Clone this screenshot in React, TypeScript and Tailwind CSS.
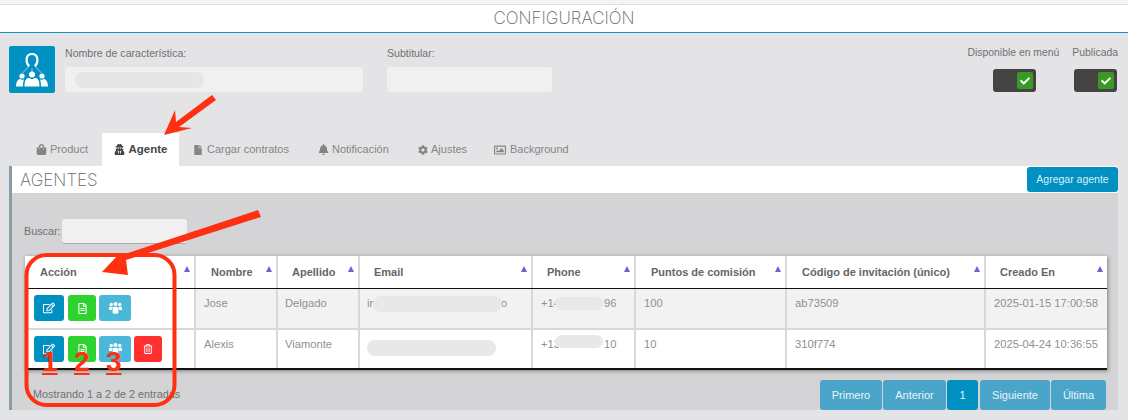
import { FaBell, FaCheck, FaCog, FaFile, FaRegEdit, FaRegFileAlt, FaRegImage, FaRegTrashAlt, FaShoppingBag, FaUserSecret } from "react-icons/fa";
import type { ReactNode } from "react";

const Pill = ({ className }: { className: string }) => (
  <span className={`absolute rounded-full bg-[#e8e8e8] ${className}`} />
);

const Toggle = () => (
  <div className="w-[43px] h-[23px] rounded-[3px] bg-[#444444] flex items-center justify-end pr-[3px]">
    <div className="w-[16px] h-[17px] rounded-[2px] bg-[#3b9a22] flex items-center justify-center text-white">
      <FaCheck size={10} />
    </div>
  </div>
);

const Tab = ({ icon, label, className }: { icon: ReactNode; label: string; className: string }) => (
  <div className={`h-[33px] flex items-center text-[#858585] text-[11px] ${className}`}>
    {icon}
    <span>{label}</span>
  </div>
);

const Sort = () => (
  <span className="absolute top-[10px] right-[4px] w-0 h-0 border-x-[3.5px] border-x-transparent border-b-[6px] border-b-[#6a62d8]" />
);

const headers = [
  { label: "Acción", pad: "pl-[15px]" },
  { label: "Nombre", pad: "pl-[15px]" },
  { label: "Apellido", pad: "pl-[14px]" },
  { label: "Email", pad: "pl-[14px]" },
  { label: "Phone", pad: "pl-[14px]" },
  { label: "Puntos de comisión", pad: "pl-[15px]" },
  { label: "Código de invitación (único)", pad: "pl-[15px]" },
  { label: "Creado En", pad: "pl-[14px]" },
];

const UsersIcon = () => (
  <svg width="13" height="12" viewBox="0 0 13 12" fill="white">
    <circle cx="2.200" cy="2.500" r="1.700" />
    <circle cx="6.500" cy="2" r="2" />
    <circle cx="10.800" cy="2.500" r="1.700" />
    <path d="M0 8V5.500C0 5 .5 4.800 1 4.800h2c.4 0 .7.2.8.5C3.300 6 3 6.800 3 8z" />
    <path d="M13 8V5.500c0-.5-.5-.7-1-.7h-2c-.4 0-.7.2-.8.5.5.7.8 1.500.8 2.700z" />
    <path d="M3.600 10.500V7.200c0-1.400.8-2.400 2-2.400h1.800c1.200 0 2 1 2 2.400v3.300c0 .8-1 1.300-2.900 1.300s-2.900-.5-2.900-1.300z" />
  </svg>
);

const ActionBtn = ({ color, width, children }: { color: string; width: string; children: ReactNode }) => (
  <div className={`h-[26px] rounded-[3px] flex items-center justify-center text-white ${color} ${width}`}>
    {children}
  </div>
);

const Actions = ({ remove }: { remove?: boolean }) => (
  <div className="flex gap-[3px] pl-[9px] pt-[6px]">
    <ActionBtn color="bg-[#0090c1] mr-[1px]" width="w-[30px]"><FaRegEdit size={12} /></ActionBtn>
    <ActionBtn color="bg-[#2fd32f]" width="w-[28px]"><FaRegFileAlt size={11} /></ActionBtn>
    <ActionBtn color="bg-[#4bb8da]" width="w-[32px]"><UsersIcon /></ActionBtn>
    {remove && <ActionBtn color="bg-[#ff3030]" width="w-[28px]"><FaRegTrashAlt size={10} /></ActionBtn>}
  </div>
);

const Cell = ({ children, bg, pl = "pl-[8px]" }: { children?: ReactNode; bg: string; pl?: string }) => (
  <div className={`relative pt-[7px] text-[11.2px] leading-[14px] text-[#909090] ${pl} ${bg}`}>{children}</div>
);

const PageBtn = ({ label, width, active }: { label: string; width: string; active?: boolean }) => (
  <div className={`h-[30px] rounded-[3px] flex items-center justify-center text-[11px] text-[#e6f4f9] ${width} ${active ? "bg-[#0090c1]" : "bg-[#4ba5c9]"}`}>
    {label}
  </div>
);

const gridCols = "grid grid-cols-[169px_80px_80px_171px_101px_149px_197px_121px] gap-x-[2px]";

export default function App() {
  return (
    <div className="relative w-[1128px] h-[420px] overflow-hidden bg-[#e4e4e7] font-['Liberation_Sans',sans-serif]">
      <div className="h-[5px] bg-[#f4f4f4] border-b border-[#dddddd]" />
      <div className="h-[28px] bg-white border-b border-[#0d94bf] flex items-center justify-center">
        <span className="font-['Inter',sans-serif] font-extralight text-[17px] text-[#666666]">CONFIGURACIÓN</span>
      </div>

      <div className="h-[100px] pl-[9px] pr-[10px] pt-[13px] flex">
        <div className="w-[46px] h-[47px] rounded-[2px] bg-[#0090c1] flex items-center justify-center">
          <svg width="32" height="35" viewBox="0 0 32 35" fill="white">
            <path d="M12.500 15C10.500 13.500 9.500 11 9.500 8 9.500 3.500 12 1 16 1s6.500 2.500 6.500 7c0 3-1 5.500-3 7l-1.500-1.800c1.500-1.200 2.300-3 2.300-5.200 0-3-1.600-4.900-4.300-4.900S11.700 5 11.700 8c0 2.200.8 4 2.300 5.200z" />
            <path d="M12.500 15 6 21.500M19.500 15 26 21.500M16 17v3" fill="none" stroke="white" strokeWidth="0.600" />
            <circle cx="6" cy="24" r="2.600" />
            <circle cx="16" cy="22.500" r="3" />
            <circle cx="26" cy="24" r="2.600" />
            <path d="M0 34.500c0-4 1.500-7 4-7.500l2.500 1 1.500-.8c-.8 2.200-1 4.500-1 7.300z" />
            <path d="M8.500 34.500c0-5 1-8 4-8.800l3.500 1.500 3.500-1.500c3 .8 4 3.800 4 8.800z" />
            <path d="M32 34.500c0-4-1.500-7-4-7.500l-2.500 1-1.500-.8c.8 2.200 1 4.500 1 7.300z" />
          </svg>
        </div>
        <div className="ml-[10px] w-[298px]">
          <div className="text-[10.600px] leading-[14px] text-[#707070]">Nombre de característica:</div>
          <div className="relative mt-[7px] h-[25px] rounded-[3px] bg-[#f0f0f0]">
            <Pill className="left-[10px] top-[5px] w-[129px] h-[16px] !bg-[#e6e6e6]" />
          </div>
        </div>
        <div className="ml-[24px] w-[165px]">
          <div className="text-[10.600px] leading-[14px] text-[#707070]">Subtitular:</div>
          <div className="mt-[7px] h-[25px] rounded-[3px] bg-[#f0f0f0]" />
        </div>
        <div className="ml-auto flex gap-[13px] text-[10.400px] leading-[14px] text-[#707070]">
          <div className="flex flex-col items-end">
            <span>Disponible en menú</span>
            <div className="mt-[9px] mr-[23px]"><Toggle /></div>
          </div>
          <div className="flex flex-col items-end">
            <span>Publicada</span>
            <div className="mt-[9px] mr-[1px]"><Toggle /></div>
          </div>
        </div>
      </div>

      <div className="flex pl-[22px]">
        <Tab className="w-[80px] justify-center gap-[3px]" label="Product" icon={<FaShoppingBag size={11} />} />
        <div className="w-[77px] h-[33px] bg-white flex items-center justify-center gap-[4px] text-[11.500px] font-bold text-[#444444]">
          <FaUserSecret size={11} />
          <span>Agente</span>
        </div>
        <Tab className="w-[123px] pl-[14px] gap-[4px]" label="Cargar contratos" icon={<FaFile size={10} />} />
        <Tab className="w-[100px] pl-[16px] gap-[3px]" label="Notificación" icon={<FaBell size={11} />} />
        <Tab className="w-[76px] pl-[16px] gap-[3px]" label="Ajustes" icon={<FaCog size={10} />} />
        <Tab className="w-[98px] pl-[16px] gap-[4px]" label="Background" icon={<FaRegImage size={12} />} />
      </div>

      <div className="ml-[9px] w-[1109px] h-[244px] border-l-[3px] border-[#8a9ba8]">
        <div className="h-[27px] bg-white flex items-center justify-between pl-[8px]">
          <span className="pt-[2px] font-['Inter',sans-serif] font-extralight text-[17px] text-[#666666]">AGENTES</span>
          <div className="w-[91px] h-[25px] rounded-[3px] bg-[#0090c1] flex items-center justify-center text-[10.500px] text-[#d8f0f8]">
            Agregar agente
          </div>
        </div>
        <div className="h-[217px] bg-[#d4d4d6] pl-[13px] pt-[26px]">
          <div className="-ml-[1px] flex items-center gap-[1px] text-[10.800px] text-[#707070]">
            <span>Buscar:</span>
            <div className="w-[125px] h-[25px] rounded-[3px] bg-[#f0f0f0] border-b border-[#aaaaaa]" />
          </div>

          <div className="mt-[12px] w-[1082px] bg-[#d8d8d8] shadow-[1px_1px_4px_rgba(0,0,0,0.4)]">
            <div className={`${gridCols} h-[33px] border-b border-[#111111]`}>
              {headers.map((h) => (
                <div key={h.label} className={`relative bg-white flex items-center text-[11px] font-bold text-[#666666] ${h.pad}`}>
                  {h.label}
                  <Sort />
                </div>
              ))}
            </div>
            <div className={`${gridCols} h-[39px]`}>
              <div className="bg-white"><Actions /></div>
              <Cell bg="bg-[#f2f2f2]">Jose</Cell>
              <Cell bg="bg-[#f2f2f2]" pl="pl-[7px]">Delgado</Cell>
              <Cell bg="bg-[#f2f2f2]" pl="pl-[7px]">in<span className="absolute left-[141px]">o</span><Pill className="left-[13px] top-[7px] w-[129px] h-[16px]" /></Cell>
              <Cell bg="bg-[#f2f2f2]">+14<Pill className="left-[22px] top-[8px] w-[48px] h-[13px]" /><span className="absolute left-[71px]">96</span></Cell>
              <Cell bg="bg-[#f2f2f2]">100</Cell>
              <Cell bg="bg-[#f2f2f2]">ab73509</Cell>
              <Cell bg="bg-[#f2f2f2]">2025-01-15 17:00:58</Cell>
            </div>
            <div className={`${gridCols} h-[40px] mt-[2px] border-b-2 border-[#111111]`}>
              <div className="bg-white"><Actions remove /></div>
              <Cell bg="bg-white">Alexis</Cell>
              <Cell bg="bg-white" pl="pl-[7px]">Viamonte</Cell>
              <Cell bg="bg-white"><Pill className="left-[7px] top-[10px] w-[129px] h-[16px]" /></Cell>
              <Cell bg="bg-white">+13<Pill className="left-[22px] top-[5px] w-[48px] h-[13px]" /><span className="absolute left-[71px]">10</span></Cell>
              <Cell bg="bg-white">10</Cell>
              <Cell bg="bg-white">310f774</Cell>
              <Cell bg="bg-white">2025-04-24 10:36:55</Cell>
            </div>
          </div>

          <div className="mt-[10px] w-[1082px] flex items-start justify-between">
            <span className="pl-[8px] pt-[6px] text-[10.800px] text-[#707070]">Mostrando 1 a 2 de 2 entradas</span>
            <div className="flex gap-[1px] pr-[1px]">
              <PageBtn label="Primero" width="w-[62px]" />
              <PageBtn label="Anterior" width="w-[63px]" />
              <PageBtn label="1" width="w-[31px] mr-[1px]" active />
              <PageBtn label="Siguiente" width="w-[70px]" />
              <PageBtn label="Última" width="w-[55px]" />
            </div>
          </div>
        </div>
      </div>
      <div className="h-[10px]" />

      {/* annotations drawn over the screenshot */}
      <svg className="absolute inset-0 pointer-events-none" width="1128" height="420" viewBox="0 0 1128 420" fill="#ff2f12">
        <path d="M212 95 216 100 179 127 192 128 164 135 175 110 176 122z" />
        <path d="M258 210 261 217 126 260 128 275 102 272 120 253 122 255z" />
        <rect x="26.500" y="255" width="148" height="150" rx="20" fill="none" stroke="#ff2f12" strokeWidth="4" />
      </svg>
      <div className="absolute left-[42px] top-[347px] flex gap-[16.400px] text-[28px] leading-[30px] font-bold text-[#ff2f12]">
        <span className="underline decoration-2 underline-offset-2">1</span>
        <span className="underline decoration-2 underline-offset-2">2</span>
        <span className="underline decoration-2 underline-offset-2">3</span>
      </div>
    </div>
  );
}
